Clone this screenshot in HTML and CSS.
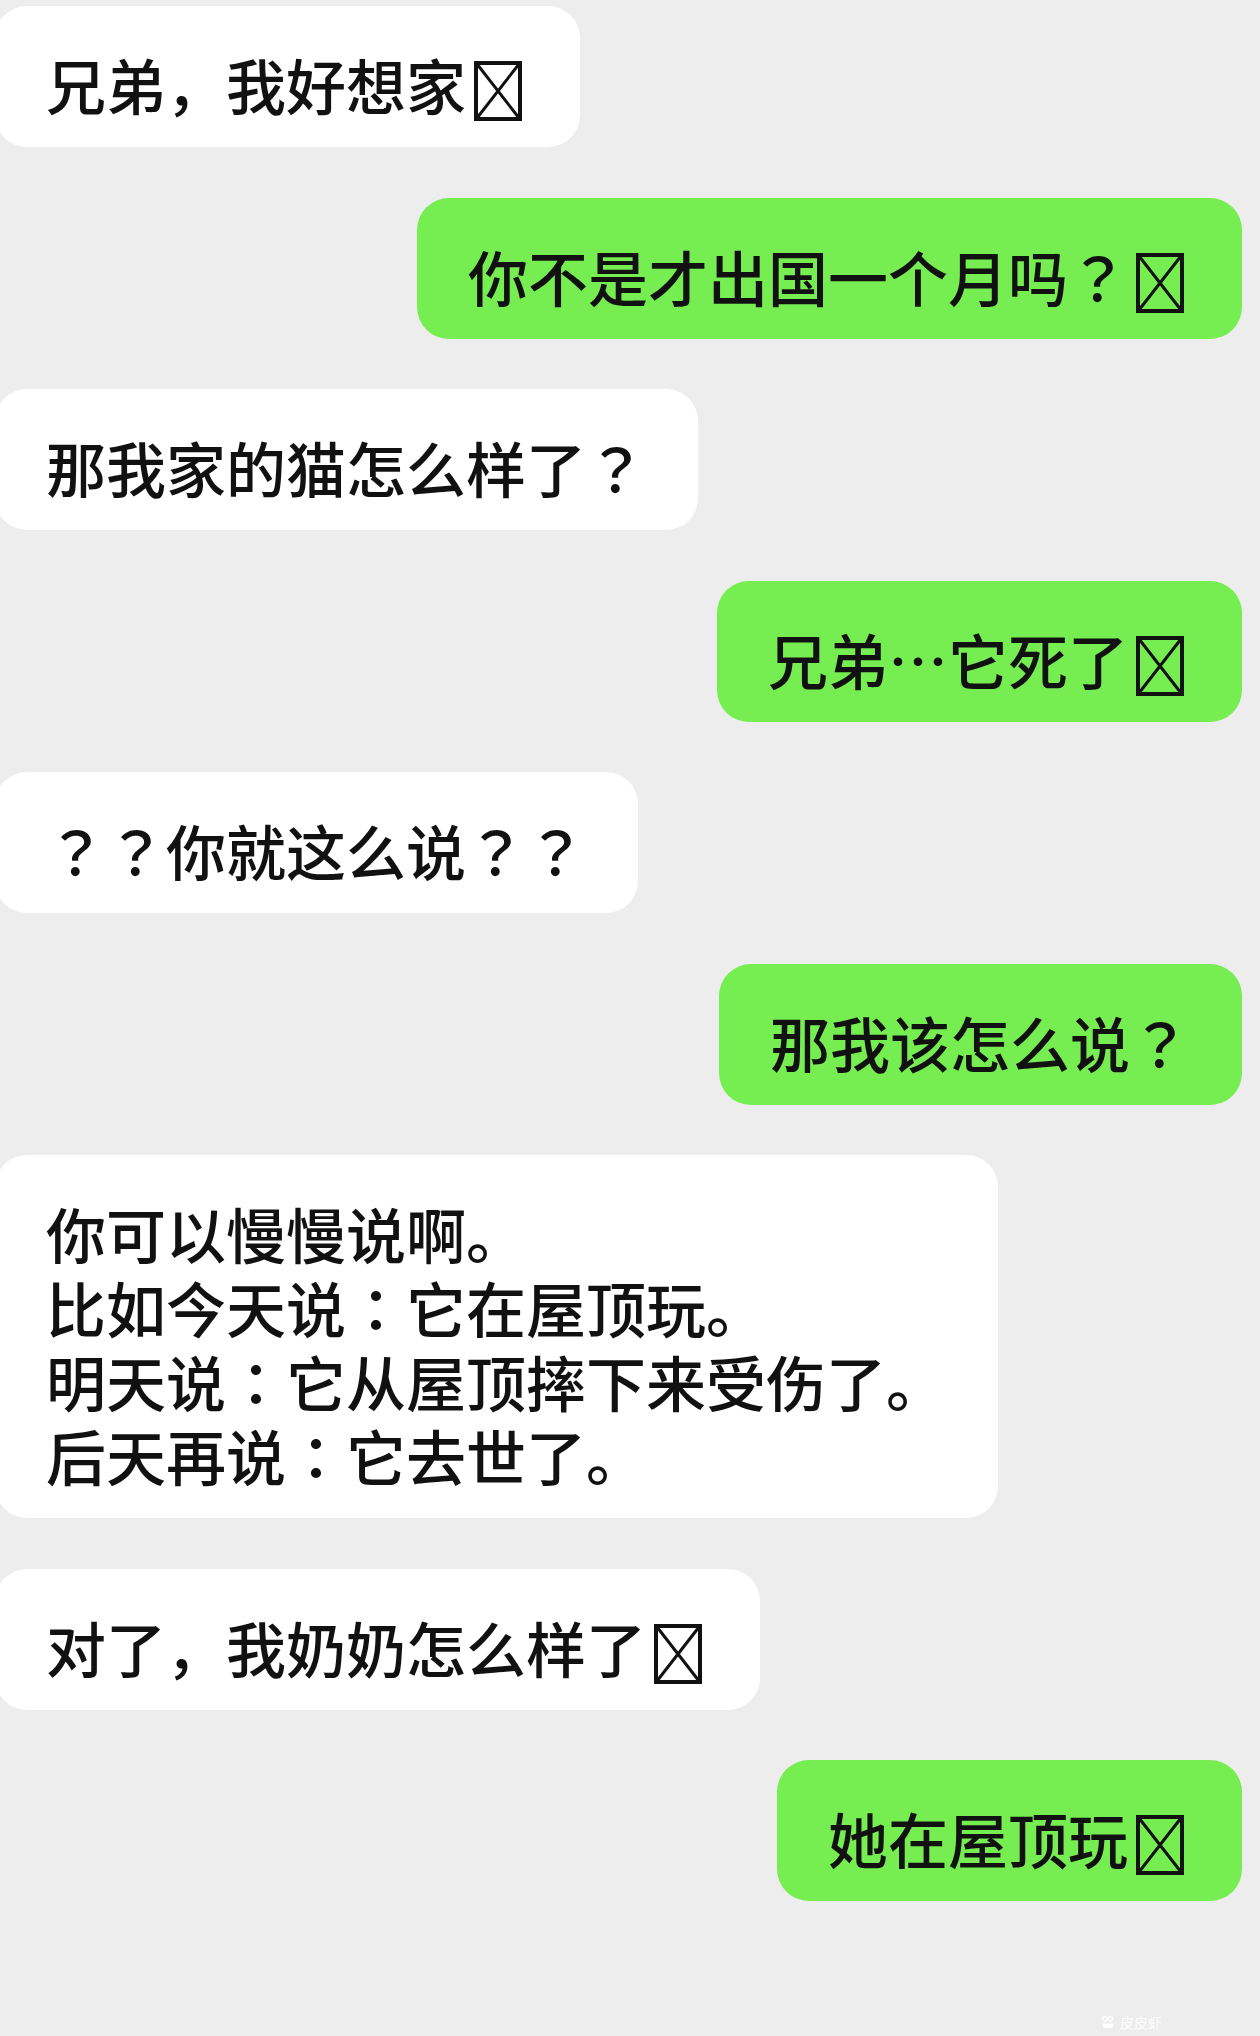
FILE: index.html
```html
<!DOCTYPE html>
<html lang="zh-CN">
<head>
  <meta charset="UTF-8">
  <title>聊天记录</title>
  <link rel="stylesheet" href="styles.css">
</head>
<body>

  <div class="chat">
    <div class="msg left">
      <div class="bubble">兄弟，我好想家<svg class="tofu" viewBox="0 0 48 60"><rect x="2" y="2" width="44" height="56" fill="none" stroke="#111" stroke-width="4"/><path d="M3 3L45 57M45 3L3 57" stroke="#111" stroke-width="3"/></svg></div>
    </div>

    <div class="msg right">
      <div class="bubble">你不是才出国一个月吗<span class="punc" lang="zh-TW">？</span><svg class="tofu" viewBox="0 0 48 60"><rect x="2" y="2" width="44" height="56" fill="none" stroke="#111" stroke-width="4"/><path d="M3 3L45 57M45 3L3 57" stroke="#111" stroke-width="3"/></svg></div>
    </div>

    <div class="msg left">
      <div class="bubble">那我家的猫怎么样了<span class="punc" lang="zh-TW">？</span></div>
    </div>

    <div class="msg right">
      <div class="bubble">兄弟…它死了<svg class="tofu" viewBox="0 0 48 60"><rect x="2" y="2" width="44" height="56" fill="none" stroke="#111" stroke-width="4"/><path d="M3 3L45 57M45 3L3 57" stroke="#111" stroke-width="3"/></svg></div>
    </div>

    <div class="msg left">
      <div class="bubble"><span class="punc" lang="zh-TW">？？</span>你就这么说<span class="punc" lang="zh-TW">？？</span></div>
    </div>

    <div class="msg right">
      <div class="bubble">那我该怎么说<span class="punc" lang="zh-TW">？</span></div>
    </div>

    <div class="msg left">
      <div class="bubble">
        你可以慢慢说啊。<br>
        比如今天说<span class="punc" lang="zh-TW">：</span>它在屋顶玩。<br>
        明天说<span class="punc" lang="zh-TW">：</span>它从屋顶摔下来受伤了。<br>
        后天再说<span class="punc" lang="zh-TW">：</span>它去世了。
      </div>
    </div>

    <div class="msg left">
      <div class="bubble">对了，我奶奶怎么样了<svg class="tofu" viewBox="0 0 48 60"><rect x="2" y="2" width="44" height="56" fill="none" stroke="#111" stroke-width="4"/><path d="M3 3L45 57M45 3L3 57" stroke="#111" stroke-width="3"/></svg></div>
    </div>

    <div class="msg right">
      <div class="bubble">她在屋顶玩<svg class="tofu" viewBox="0 0 48 60"><rect x="2" y="2" width="44" height="56" fill="none" stroke="#111" stroke-width="4"/><path d="M3 3L45 57M45 3L3 57" stroke="#111" stroke-width="3"/></svg></div>
    </div>
  </div>

  <!-- watermark -->
  <div class="watermark">
    <svg class="wm-icon" viewBox="0 0 16 14"><circle cx="4" cy="3" r="2.4" fill="none" stroke="#fff" stroke-width="1.4"/><circle cx="10" cy="3" r="2.4" fill="none" stroke="#fff" stroke-width="1.4"/><path d="M1 8h13l-2 5H3z" fill="#fff"/></svg>
    <span>皮皮虾</span>
  </div>

</body>
</html>
```

FILE: styles.css
```css
body {
  font-family: "Noto Sans CJK SC", "Noto Sans", sans-serif;
  background: #ededed;
  margin: 0;
  padding: 0;
  min-height: 2036px;
  position: relative;
  overflow: hidden;
}

.chat {
  display: flex;
  flex-direction: column;
  gap: 50.5px;
  padding-top: 6px;
}

.msg {
  display: flex;
}

.msg.left {
  justify-content: flex-start;
  margin-left: -5px;
}

.msg.right {
  justify-content: flex-end;
  margin-right: 18px;
}

.bubble {
  font-size: 60px;
  font-weight: 500;
  line-height: 74px;
  color: #111;
  padding: 41px 52px 26px 51px;
  border-radius: 32px;
  white-space: nowrap;
}

.left .bubble {
  background: #fff;
}

.right .bubble {
  background: #76ed51;
}

/* centred full-width punctuation */
.punc {
  font-family: "Noto Sans CJK TC", sans-serif;
}

.tofu {
  width: 48px;
  height: 60px;
  margin: 0 6px 0 8px;
  vertical-align: -11px;
}

.watermark {
  position: absolute;
  right: 98px;
  bottom: 4px;
  display: flex;
  align-items: center;
  gap: 4px;
  color: rgba(255, 255, 255, 0.9);
  font-size: 14px;
  font-weight: 400;
}

.wm-icon {
  width: 15px;
  height: 13px;
}
```
